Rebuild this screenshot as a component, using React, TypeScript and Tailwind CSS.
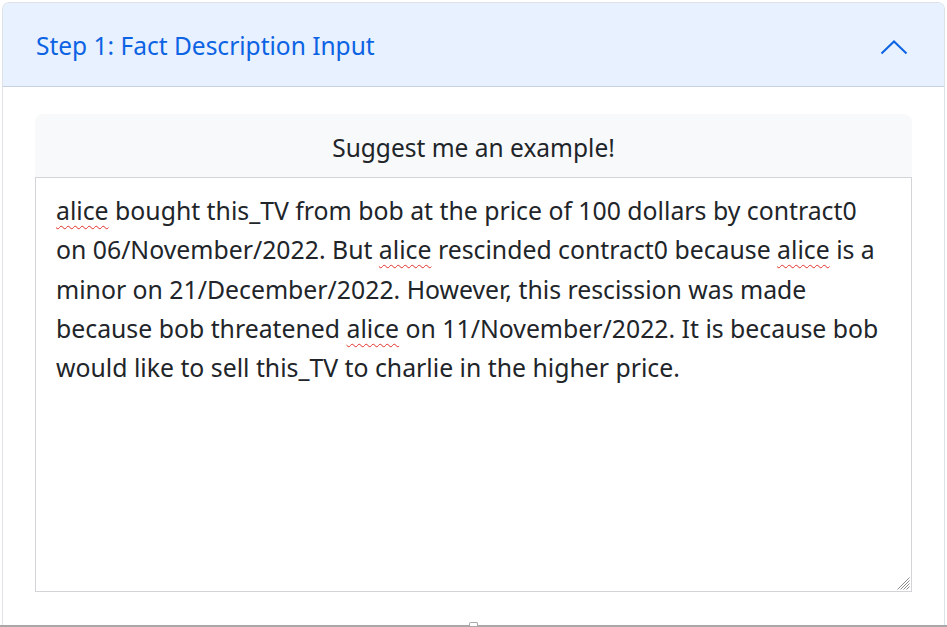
import type { ReactNode } from 'react'

// Step 1 accordion — fact description input

const font = { fontFamily: '"Noto Sans", "Open Sans", sans-serif' }

function Typo({ children }: { children: ReactNode }) {
  return (
    <span className="underline decoration-wavy decoration-[#e0302a] decoration-[1px] underline-offset-[5px]">
      {children}
    </span>
  )
}

function Grip() {
  return (
    <svg className="absolute bottom-[1px] right-[1px]" width="13" height="13" viewBox="0 0 13 13">
      <g stroke="#8d8d8d" strokeWidth="1">
        <line x1="12.5" y1="0.5" x2="0.5" y2="12.5" />
        <line x1="12.5" y1="3.5" x2="3.5" y2="12.5" />
        <line x1="12.5" y1="6.5" x2="6.5" y2="12.5" />
        <line x1="12.5" y1="9.5" x2="9.5" y2="12.5" />
      </g>
    </svg>
  )
}

export default function App() {
  return (
    <div className="relative flex h-[627px] w-[947px] flex-col overflow-hidden bg-white text-[#212529]" style={font}>
      <div className="ml-[2px] mt-[2px] w-[943px] rounded-t-[7px] border border-b-0 border-[#dee2e6]">
        <div className="flex h-[84px] items-center justify-between rounded-t-[6px] bg-[#e7f1ff] pl-[33px] pr-[36px] pt-[3px] shadow-[inset_0_-1px_0_rgba(0,0,0,0.13)]">
          <span className="text-[24.5px] text-[#0c63e4]">Step 1: Fact Description Input</span>
          <svg width="28" height="16" viewBox="0 0 28 16" fill="none">
            <polyline points="1.5,14.5 14,2.5 26.5,14.5" stroke="#0c63e4" strokeWidth="2" />
          </svg>
        </div>

        <div className="px-[32px] pb-[33px] pt-[27px]">
          <div className="flex h-[63px] items-center justify-center rounded-t-[8px] bg-[#f8f9fa] pt-[5px] text-[24.5px]">
            Suggest me an example!
          </div>
          <div className="relative h-[415px] border border-[#d2d4d7]">
            <div className="h-full overflow-hidden pl-[20px] pr-[24px] pt-[13px] text-[24.8px] leading-[39.3px]">
              <Typo>alice</Typo> bought this_TV from bob at the price of 100 dollars by contract0 on
              06/November/2022. But <Typo>alice</Typo> rescinded contract0 because <Typo>alice</Typo> is a
              minor on 21/December/2022. However, this rescission was made because bob threatened{' '}
              <Typo>alice</Typo> on 11/November/2022. It is because bob would like to sell this_TV to
              charlie in the higher price.
            </div>
            <Grip />
          </div>
        </div>
      </div>

      <div className="relative h-[2px] w-full bg-[#a8a8a8]">
        <div className="absolute left-[469px] top-[-3px] h-[4px] w-[9px] rounded-t-[2px] border border-b-0 border-[#a8a8a8] bg-white" />
      </div>
    </div>
  )
}
